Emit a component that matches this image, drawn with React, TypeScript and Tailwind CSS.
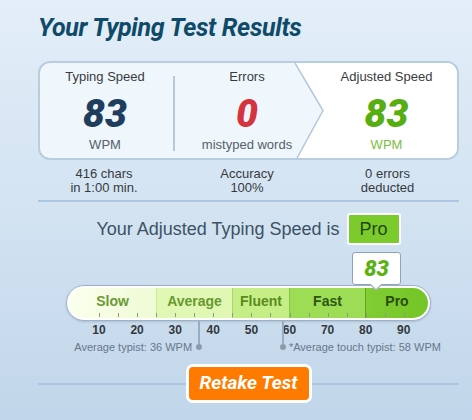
import React from "react";

const sans = "font-['Liberation_Sans',Arial,sans-serif]";
const display = "font-['Roboto','Open_Sans',sans-serif]";

// px position on the bar for a given WPM value
const pos = (wpm: number) => 3.81 * wpm - 5.1;

const segments = [
  { label: "Slow", cls: "bg-gradient-to-r from-[#fbffee] to-[#eefbd4] text-[#6b9a37]" },
  { label: "Average", cls: "bg-[#e1f7b4] text-[#679a2d] border-l border-[#cde6a0]" },
  { label: "Fluent", cls: "bg-[#c5ee86] text-[#5a8c1f] border-l border-[#a9d578]" },
  { label: "Fast", cls: "bg-[#9ddd55] text-[#2d5611] border-l border-[#86c54a]" },
  { label: "Pro", cls: "bg-gradient-to-r from-[#80cd34] to-[#74c527] text-[#2a4c0f] border-l border-[#5ea526]" },
];

const ticks = [10, 15, 20, 25, 30, 35, 40, 45, 50, 55, 60, 65, 70, 75, 80, 85, 90];
const numbers = [10, 20, 30, 40, 50, 60, 70, 80, 90];

function Stat({
  title,
  value,
  unit,
  valueCls,
  unitCls,
  width,
}: {
  title: string;
  value: string;
  unit: string;
  valueCls: string;
  unitCls: string;
  width: string;
}) {
  return (
    <div className={`flex flex-col items-center pt-[6px] ${width}`}>
      <div className="text-[13px] leading-[16px] text-[#383c40]">{title}</div>
      <div className={`${display} mt-[10px] text-[39px] leading-[38px] font-black italic ${valueCls}`}>{value}</div>
      <div className={`mt-[4px] text-[13px] leading-[16px] ${unitCls}`}>{unit}</div>
    </div>
  );
}

function Marker({ wpm, label, side }: { wpm: number; label: string; side: "left" | "right" }) {
  const x = pos(wpm) + 1;
  return (
    <>
      <div className="absolute top-0 w-[1.5px] h-[26px] bg-[#9badbd]" style={{ left: x - 0.75 }} />
      <div className="absolute top-[23px] w-[6px] h-[6px] rounded-full bg-[#8c9cad]" style={{ left: x - 3 }} />
      <div
        className={`absolute top-[19px] text-[11px] leading-[14px] whitespace-nowrap text-[#66778a] ${
          side === "left" ? "text-right" : ""
        }`}
        style={side === "left" ? { right: 365 - x + 7 } : { left: x + 6 }}
      >
        {label}
      </div>
    </>
  );
}

export default function App() {
  return (
    <div className={`${sans} w-[472px] h-[420px] overflow-hidden bg-gradient-to-b from-[#e3eef8] via-[#d3e3f2] to-[#c1d6ea]`}>
      <div className="ml-[38px] w-[421px] pt-[14px]">
        <h1 className={`${display} text-[25px] leading-[28px] font-bold italic tracking-[-0.3px] text-[#0f4a68]`}>
          Your Typing Test Results
        </h1>

        <div className="relative mt-[19px] h-[99px] rounded-[12px] border-2 border-[#b8cde0] bg-[#eff6fc] overflow-hidden">
          <svg className="absolute inset-0" width="417" height="95" viewBox="0 0 417 95">
            <polygon points="255,0 283,47.5 257,95 417,95 417,0" fill="#ffffff" />
            <polyline points="255,0 283,47.5 257,95" fill="none" stroke="#b3c7da" strokeWidth="1.5" />
          </svg>
          <div className="relative flex h-full">
            <Stat
              width="w-[130px]"
              title="Typing Speed"
              value="83"
              unit="WPM"
              valueCls="text-[#1f3e5e]"
              unitCls="text-[#55606a]"
            />
            <div className="mx-[3px] mt-[13px] h-[75px] w-[2px] bg-[#b6c8d9]" />
            <Stat
              width="w-[138px]"
              title="Errors"
              value="0"
              unit="mistyped words"
              valueCls="text-[#d3343e]"
              unitCls="text-[#55606a]"
            />
            <Stat
              width="flex-1"
              title="Adjusted Speed"
              value="83"
              unit="WPM"
              valueCls="text-[#57ae10]"
              unitCls="text-[#7bbd40]"
            />
          </div>
        </div>

        <div className="mt-[7px] flex text-[13px] leading-[14px] text-[#363a3e] text-center">
          <div className="w-[132px]">416 chars<br />in 1:00 min.</div>
          <div className="w-[8px]" />
          <div className="w-[138px]">Accuracy<br />100%</div>
          <div className="flex-1">0 errors<br />deducted</div>
        </div>

        <div className="mt-[5px] h-[2px] bg-[#aac6e0]" />

        <div className="mt-[11px] flex items-center justify-center gap-[7px]">
          <span className="text-[18px] text-[#3c5265]">Your Adjusted Typing Speed is</span>
          <span className="flex h-[32px] w-[54px] items-center justify-center rounded-[3px] border-2 border-white bg-[#7ccb2c] text-[18px] text-[#22470c]">
            Pro
          </span>
        </div>

        <div className="ml-[28px] mt-[40px] w-[365px]">
          <div className="relative h-[36px]">
            <div className="h-full rounded-full border-[1.5px] border-[#9fb2c5] bg-white p-[2px] shadow-[0_1px_2px_rgba(80,110,140,0.25)]">
              <div className="grid h-full grid-cols-[87px_76px_57px_76px_1fr] overflow-hidden rounded-full">
                {segments.map((s) => (
                  <div key={s.label} className={`flex items-center justify-center pb-[3px] text-[14px] font-bold ${s.cls}`}>
                    {s.label}
                  </div>
                ))}
              </div>
            </div>
            {ticks.map((t) => (
              <div
                key={t}
                className="absolute bottom-[4px] h-[4px] w-px bg-[#8a9a86]"
                style={{ left: pos(t) }}
              />
            ))}
            <div className="absolute -top-[33px] left-[286px] z-10 flex h-[33px] w-[49px] items-center justify-center rounded-[3px] border-[1.5px] border-[#8ea2b8] bg-white">
              <span className={`${display} text-[22px] font-black italic text-[#5cb214]`}>83</span>
              <div className="absolute -bottom-[5px] left-[19px] h-[8px] w-[8px] rotate-45 border-b-[1.5px] border-r-[1.5px] border-[#8ea2b8] bg-white" />
            </div>
          </div>

          <div className="relative h-[34px]">
            {numbers.map((n) => (
              <div
                key={n}
                className="absolute top-[2px] w-[30px] text-center text-[12px] leading-[14px] font-bold text-[#33383d]"
                style={{ left: pos(n) - 15 }}
              >
                {n}
              </div>
            ))}
            <Marker wpm={36} label="Average typist: 36 WPM" side="left" />
            <Marker wpm={58} label="*Average touch typist: 58 WPM" side="right" />
          </div>
        </div>

        <div className="mt-[9px] flex items-center">
          <div className="h-[2px] flex-1 bg-[#aac6e0]" />
          <button
            className={`${display} h-[39px] w-[126px] rounded-[7px] border-[3px] border-white bg-[#ff7b00] text-[19px] font-bold italic text-white`}
          >
            Retake Test
          </button>
          <div className="h-[2px] flex-1 bg-[#aac6e0]" />
        </div>
      </div>
    </div>
  );
}
